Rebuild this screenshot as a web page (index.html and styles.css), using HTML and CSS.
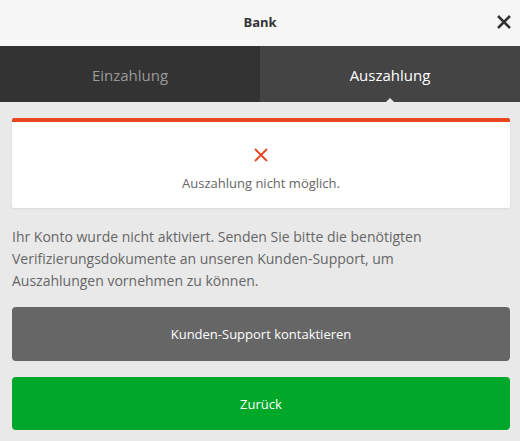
FILE: index.html
```html
<!DOCTYPE html>
<html lang="de">
<head>
  <meta charset="UTF-8" />
  <title>Bank</title>
  <link rel="stylesheet" href="styles.css">
</head>
<body>
  <div class="header">
    <h1>Bank</h1>
    <a href="#" class="close-btn" aria-label="Schließen">
      <svg width="16" height="16" viewBox="0 0 16 16">
        <path d="M2 2 L14 14 M14 2 L2 14" stroke="#333" stroke-width="2.6" fill="none" />
      </svg>
    </a>
  </div>

  <div class="tabs">
    <div class="tab">Einzahlung</div>
    <div class="tab active">Auszahlung</div>
  </div>

  <div class="content">
    <div class="notice">
      <svg class="notice-icon" width="16" height="16" viewBox="0 0 16 16">
        <path d="M2 2 L14 14 M14 2 L2 14" stroke="#e8461f" stroke-width="1.8" fill="none" />
      </svg>
      <p>Auszahlung nicht möglich.</p>
    </div>

    <p class="info">Ihr Konto wurde nicht aktiviert. Senden Sie bitte die benötigten Verifizierungsdokumente an unseren Kunden-Support, um Auszahlungen vornehmen zu können.</p>

    <button class="btn btn-grey">Kunden-Support kontaktieren</button>
    <button class="btn btn-green">Zurück</button>
  </div>
</body>
</html>
```

FILE: styles.css
```css
* {
  box-sizing: border-box;
  margin: 0;
  padding: 0;
  font-family: 'Open Sans', sans-serif;
}

body {
  background-color: #e9e9e9;
  width: 520px;
  height: 441px;
  overflow: hidden;
}

.header {
  height: 46px;
  background-color: #f7f7f7;
  display: flex;
  align-items: center;
  justify-content: center;
  position: relative;
}

.header h1 {
  font-size: 13px;
  font-weight: 700;
  color: #333;
  margin-top: -3px;
}

.close-btn {
  position: absolute;
  right: 8px;
  top: 14px;
  display: block;
  width: 16px;
  height: 16px;
}

.close-btn svg {
  display: block;
}

.tabs {
  display: flex;
  height: 56px;
}

.tab {
  flex: 1;
  display: flex;
  align-items: center;
  justify-content: center;
  background-color: #333;
  color: #999;
  font-size: 15px;
  position: relative;
  padding-top: 2px;
}

.tab.active {
  background-color: #444;
  color: #fff;
}

.tab.active::after {
  content: "";
  position: absolute;
  bottom: 0;
  left: 50%;
  margin-left: -4px;
  border-left: 4px solid transparent;
  border-right: 4px solid transparent;
  border-bottom: 4px solid #e9e9e9;
}

.content {
  padding: 16px 10px 0 12px;
}

.notice {
  background-color: #fff;
  border-top: 4px solid #e8461f;
  border-radius: 2px;
  box-shadow: 0 1px 2px rgba(0, 0, 0, 0.08);
  height: 90px;
  display: flex;
  flex-direction: column;
  align-items: center;
  padding-top: 25px;
}

.notice-icon {
  display: block;
}

.notice p {
  margin-top: 11px;
  font-size: 13px;
  color: #666;
}

.info {
  margin-top: 18px;
  max-width: 470px;
  font-size: 14px;
  line-height: 22px;
  color: #666;
}

.btn {
  display: block;
  width: 100%;
  border: none;
  border-radius: 4px;
  color: #fff;
  font-size: 13px;
  cursor: pointer;
}

.btn-grey {
  margin-top: 15px;
  height: 54px;
  background-color: #666;
}

.btn-green {
  margin-top: 16px;
  height: 53px;
  background-color: #00a82a;
}
```
